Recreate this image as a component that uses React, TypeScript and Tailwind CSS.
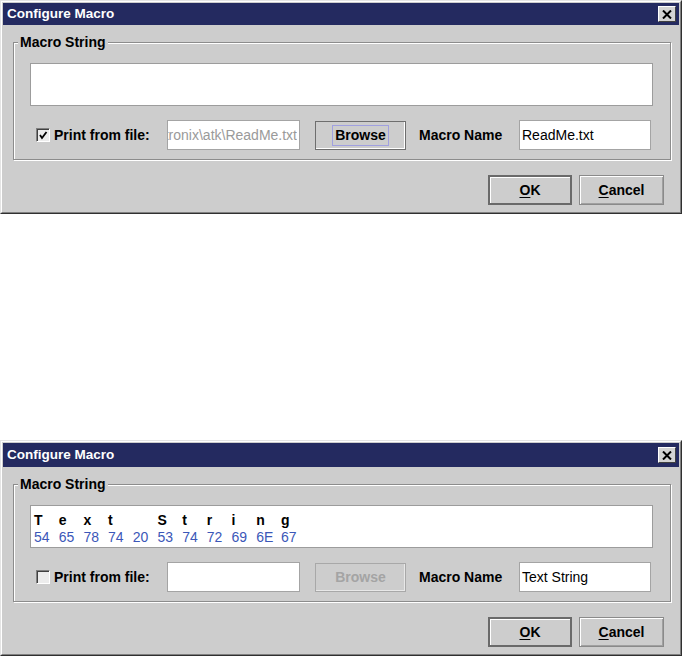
import React from "react";

const FONT = { fontFamily: '"Liberation Sans", Arial, sans-serif' };

function CloseBtn() {
  return (
    <div className="w-[18px] h-[16px] bg-[#d4d4d4] border border-t-white border-l-white border-r-[#404040] border-b-[#404040] flex items-center justify-center">
      <svg width="10" height="9" viewBox="0 0 10 9">
        <path d="M1 0.5 L9 8.5 M9 0.5 L1 8.5" stroke="#000" strokeWidth="2" />
      </svg>
    </div>
  );
}

function CheckBox({ checked }: { checked: boolean }) {
  return (
    <div className="w-[14px] h-[14px] border border-t-[#808080] border-l-[#808080] border-r-white border-b-white bg-[#ececec] shadow-[inset_1px_1px_0_#404040] flex items-center justify-center">
      {checked && (
        <svg width="10" height="10" viewBox="0 0 10 10">
          <path d="M2 5 L4 8 L8.5 2" stroke="#000" strokeWidth="1.8" fill="none" />
        </svg>
      )}
    </div>
  );
}

const TOP = ["T", "e", "x", "t", "", "S", "t", "r", "i", "n", "g"];
const HEX = ["54", "65", "78", "74", "20", "53", "74", "72", "69", "6E", "67"];

function Line({ cells, className }: { cells: string[]; className: string }) {
  return (
    <div className={"flex h-[17px] items-center leading-[17px] pl-[3px] " + className}>
      {cells.map((t, i) => (
        <span key={i} className="shrink-0 w-[24.7px]">
          {t}
        </span>
      ))}
    </div>
  );
}

function Dialog({ filled, titleH }: { filled: boolean; titleH: string }) {
  return (
    <div className="border border-t-[#e4e4e4] border-l-[#e4e4e4] border-r-[#303030] border-b-[#303030] bg-[#cdcdcd]">
      <div className="border border-t-white border-l-white border-r-[#808080] border-b-[#808080] p-px">
        <div className={"bg-[#242a60] flex items-center justify-between pl-[4px] pr-[3px] " + titleH}>
          <span className="text-white font-bold text-[13.5px] leading-none">Configure Macro</span>
          <CloseBtn />
        </div>
        <div className="pt-[17px] pl-[10px] pr-[8px] pb-[6px]">
          <div className="relative border border-[#8c8c8c] shadow-[inset_1px_1px_0_#ffffff,1px_1px_0_#ffffff] pt-[20px] pb-[9px] pl-[16px] pr-[17px]">
            <span className="absolute left-[4px] -top-[9px] bg-[#cdcdcd] px-[2px] text-[14px] leading-[16px] font-bold text-black">
              Macro String
            </span>
            <div className={"bg-white border border-[#9c9c9c] h-[43px] " + (filled ? "pt-[6px]" : "")}>
              {filled && (
                <>
                  <Line cells={TOP} className="font-bold text-black text-[14px]" />
                  <Line cells={HEX} className="text-[#3b57b8] text-[14px]" />
                </>
              )}
            </div>
            <div className="flex items-center mt-[14px] h-[30px]">
              <div className="w-[137px] flex items-center pl-[6px] gap-[4px]">
                <CheckBox checked={!filled} />
                <span className="text-[14px] font-bold text-black whitespace-nowrap">Print from file:</span>
              </div>
              <div className="w-[133px] h-[30px] bg-white border border-[#a4a4a4] flex items-center pr-[2px]">
                {!filled && (
                  <span dir="rtl" className="block w-full overflow-hidden text-[14px] text-[#9a9a9a] whitespace-nowrap">
                    C:\Tektronix\atk\ReadMe.txt
                  </span>
                )}
              </div>
              {!filled ? (
                <div className="ml-[15px] w-[91px] h-[29px] border border-[#6e6e6e] shadow-[inset_-1px_-1px_0_#ffffff] flex items-center justify-center">
                  <span className="border border-[#a0a0e0] px-[2px] h-[21px] leading-[19px] text-[14px] font-bold text-black">
                    Browse
                  </span>
                </div>
              ) : (
                <div className="ml-[15px] w-[91px] h-[29px] border border-[#a8a8a8] shadow-[inset_-1px_-1px_0_#e8e8e8] flex items-center justify-center">
                  <span className="text-[14px] font-bold text-[#a4a4a4]">Browse</span>
                </div>
              )}
              <span className="ml-[13px] w-[100px] text-[14px] font-bold text-black whitespace-nowrap">Macro Name</span>
              <div className="w-[132px] h-[30px] bg-white border border-[#a4a4a4] flex items-center pl-[2px]">
                <span className="text-[14px] text-black whitespace-nowrap">{filled ? "Text String" : "ReadMe.txt"}</span>
              </div>
            </div>
          </div>
          <div className="flex justify-end gap-[7px] mt-[15px] pr-[7px]">
            <div className="w-[84px] h-[30px] border-2 border-[#6a6a6a] shadow-[inset_1px_1px_0_#ffffff] flex items-center justify-center text-[14px] font-bold text-black">
              <span>
                <span className="underline underline-offset-2">O</span>K
              </span>
            </div>
            <div className="w-[85px] h-[30px] border border-[#8a8a8a] shadow-[inset_1px_1px_0_#ffffff,inset_-1px_-1px_0_#a0a0a0] flex items-center justify-center text-[14px] font-bold text-black">
              <span>
                <span className="underline underline-offset-2">C</span>ancel
              </span>
            </div>
          </div>
        </div>
      </div>
    </div>
  );
}

export default function App() {
  return (
    <div className="w-[682px] h-[657px] bg-white overflow-hidden" style={FONT}>
      <Dialog filled={false} titleH="h-[22px]" />
      <div className="h-[226px]" />
      <Dialog filled={true} titleH="h-[24px]" />
    </div>
  );
}
